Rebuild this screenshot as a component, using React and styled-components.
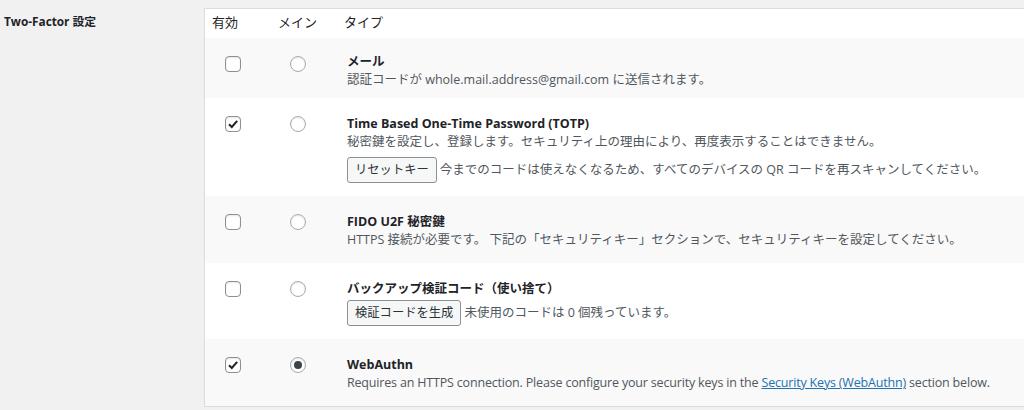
import React from "react";
import styled, { createGlobalStyle } from "styled-components";

const GlobalStyle = createGlobalStyle`
  html, body {
    margin: 0;
    padding: 0;
    background: #f1f1f1;
    overflow: hidden;
  }
  body {
    font-family: "Open Sans", "Noto Sans CJK JP", sans-serif;
    font-size: 12.5px;
    color: #3c434a;
  }
`;

const Page = styled.div`
  display: flex;
  align-items: flex-start;
  width: 1100px;
  padding-top: 8px;
`;

const Label = styled.div`
  flex: 0 0 200px;
  padding: 3px 0 0 4px;
  font-size: 11.8px;
  font-weight: 700;
  line-height: 20px;
  color: #1d2327;
`;

const Table = styled.table`
  flex: 0 0 830px;
  width: 830px;
  table-layout: fixed;
  border-collapse: collapse;
  background: #fff;
  border: 1px solid #dcdcde;
  box-shadow: 0 1px 1px rgba(0, 0, 0, 0.04);
`;

const HeadCell = styled.th`
  width: ${(p) => (p.$w ? `${p.$w}px` : "auto")};
  padding: 3px 7px 6px;
  text-align: left;
  font-weight: 400;
  font-size: 13px;
  line-height: 20px;
  color: #1d2327;
`;

const Row = styled.tr`
  background: ${(p) => (p.$alt ? "#f9f9f9" : "#fff")};
`;

const InputCell = styled.td`
  vertical-align: top;
  padding: ${(p) => p.$top}px 0 0 ${(p) => p.$left}px;
`;

const TypeCell = styled.td`
  vertical-align: top;
  padding: ${(p) => (p.$tight ? "15px 10px 9px" : "17px 10px 13px")};
`;

const Title = styled.div`
  font-weight: 700;
  color: #1d2327;
  line-height: ${(p) => (p.$tight ? 18 : 17)}px;
`;

const Desc = styled.div`
  color: #50575e;
  white-space: nowrap;
  line-height: ${(p) => (p.$tight ? 18 : 20)}px;
  letter-spacing: ${(p) => (p.$latin ? "-0.18px" : "0")};
`;

const ActionLine = styled.div`
  margin-top: ${(p) => (p.$afterDesc ? 5 : 3)}px;
  color: #50575e;
  line-height: 26px;
  display: flex;
  align-items: center;
  gap: 3px;
  white-space: nowrap;
`;

const Button = styled.button`
  height: 26px;
  padding: 0 7px;
  border: 1px solid #8c8f94;
  border-radius: 3px;
  background: #f6f7f7;
  color: #2c3338;
  font-family: inherit;
  font-size: 12.3px;
  line-height: 24px;
`;

const Box = styled.span`
  display: flex;
  align-items: center;
  justify-content: center;
  box-sizing: border-box;
  width: 16px;
  height: 16px;
  border: 1px solid #8c8f94;
  border-radius: 4px;
  background: #fff;
  box-shadow: inset 0 1px 2px rgba(0, 0, 0, 0.1);
`;

const Radio = styled.span`
  display: flex;
  align-items: center;
  justify-content: center;
  box-sizing: border-box;
  width: 16px;
  height: 16px;
  border: 1px solid #a7aaad;
  border-radius: 50%;
  background: #fff;
  box-shadow: inset 0 1px 2px rgba(0, 0, 0, 0.1);

  &::after {
    content: "";
    display: ${(p) => (p.$on ? "block" : "none")};
    width: 8px;
    height: 8px;
    border-radius: 50%;
    background: #3c434a;
  }
`;

const Link = styled.a`
  color: #2271b1;
  text-decoration: underline;
`;

const Check = ({ on }) => (
  <Box>
    {on && (
      <svg width="12" height="12" viewBox="0 0 12 12">
        <path d="M2 6.2 L4.8 9 L10.2 2.8" fill="none" stroke="#1d2327" strokeWidth="2" />
      </svg>
    )}
  </Box>
);

const rows = [
  {
    title: "メール",
    tight: true,
    desc: "認証コードが whole.mail.address@gmail.com に送信されます。",
  },
  {
    title: "Time Based One-Time Password (TOTP)",
    enabled: true,
    desc: "秘密鍵を設定し、登録します。セキュリティ上の理由により、再度表示することはできません。",
    button: "リセットキー",
    note: "今までのコードは使えなくなるため、すべてのデバイスの QR コードを再スキャンしてください。",
  },
  {
    title: "FIDO U2F 秘密鍵",
    desc: "HTTPS 接続が必要です。 下記の「セキュリティキー」セクションで、セキュリティキーを設定してください。",
  },
  {
    title: "バックアップ検証コード（使い捨て）",
    button: "検証コードを生成",
    note: "未使用のコードは 0 個残っています。",
  },
  {
    title: "WebAuthn",
    enabled: true,
    primary: true,
    latin: true,
    desc: (
      <>
        Requires an HTTPS connection. Please configure your security keys in the{" "}
        <Link href="#">Security Keys (WebAuthn)</Link> section below.
      </>
    ),
  },
];

export default function App() {
  return (
    <>
      <GlobalStyle />
      <Page>
        <Label>Two-Factor 設定</Label>
        <Table>
          <thead>
            <tr>
              <HeadCell $w={52}>有効</HeadCell>
              <HeadCell $w={52}>メイン</HeadCell>
              <HeadCell>タイプ</HeadCell>
            </tr>
          </thead>
          <tbody>
            {rows.map((r, i) => (
              <Row key={i} $alt={i % 2 === 0}>
                <InputCell $top={18} $left={20}>
                  <Check on={r.enabled} />
                </InputCell>
                <InputCell $top={18} $left={19}>
                  <Radio $on={r.primary} />
                </InputCell>
                <TypeCell $tight={r.tight}>
                  <Title $tight={r.tight}>{r.title}</Title>
                  {r.desc && (
                    <Desc $tight={r.tight} $latin={r.latin}>
                      {r.desc}
                    </Desc>
                  )}
                  {r.button && (
                    <ActionLine $afterDesc={!!r.desc}>
                      <Button>{r.button}</Button>
                      {r.note}
                    </ActionLine>
                  )}
                </TypeCell>
              </Row>
            ))}
          </tbody>
        </Table>
      </Page>
    </>
  );
}
